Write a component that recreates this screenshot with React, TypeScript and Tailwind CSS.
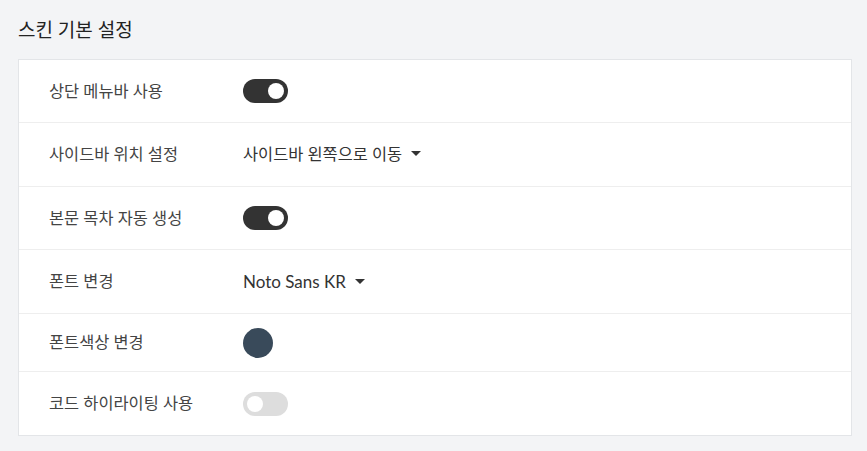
import React from "react";

const font = { fontFamily: 'Lato, "Noto Sans CJK KR", sans-serif' };

function Toggle({ on }: { on: boolean }) {
  return (
    <div
      className={`w-[45px] h-[24px] rounded-full flex items-center px-[4px] ${
        on ? "bg-[#333333] justify-end" : "bg-[#dddddd] justify-start"
      }`}
    >
      <div className="w-[16px] h-[16px] rounded-full bg-white" />
    </div>
  );
}

function Caret() {
  return (
    <svg width="10" height="6" viewBox="0 0 10 6" className="ml-[9px]">
      <path d="M0 0 L10 0 L5 5 Z" fill="#333" />
    </svg>
  );
}

function Row({ label, children, h = "h-[63px]", last = false }: { label: string; children: React.ReactNode; h?: string; last?: boolean }) {
  return (
    <div className={`flex items-center ${h} ${last ? "" : "border-b border-[#eeeeee]"}`}>
      <div className="w-[224px] pl-[30px] text-[16.4px] text-[#444444]">{label}</div>
      <div className="flex items-center text-[16.4px] text-[#333333]">{children}</div>
    </div>
  );
}

export default function App() {
  return (
    <div className="w-[867px] h-[451px] bg-[#f3f4f6] px-[18px] pt-[14px]" style={font}>
      <h2 className="text-[19px] text-[#222222] h-[32px] leading-[32px] mb-[13px] mt-[0px]">스킨 기본 설정</h2>
      <div className="w-[834px] bg-white border border-[#e3e5e8]">
        <Row label="상단 메뉴바 사용">
          <Toggle on />
        </Row>
        <Row label="사이드바 위치 설정" h="h-[64px]">
          <span>사이드바 왼쪽으로 이동</span>
          <Caret />
        </Row>
        <Row label="본문 목차 자동 생성">
          <Toggle on />
        </Row>
        <Row label="폰트 변경" h="h-[64px]">
          <span className="text-[17px]">Noto Sans KR</span>
          <Caret />
        </Row>
        <Row label="폰트색상 변경" h="h-[58px]">
          <div className="w-[30px] h-[30px] rounded-full bg-[#394a5a]" />
        </Row>
        <Row label="코드 하이라이팅 사용" h="h-[63px]" last>
          <Toggle on={false} />
        </Row>
      </div>
    </div>
  );
}
